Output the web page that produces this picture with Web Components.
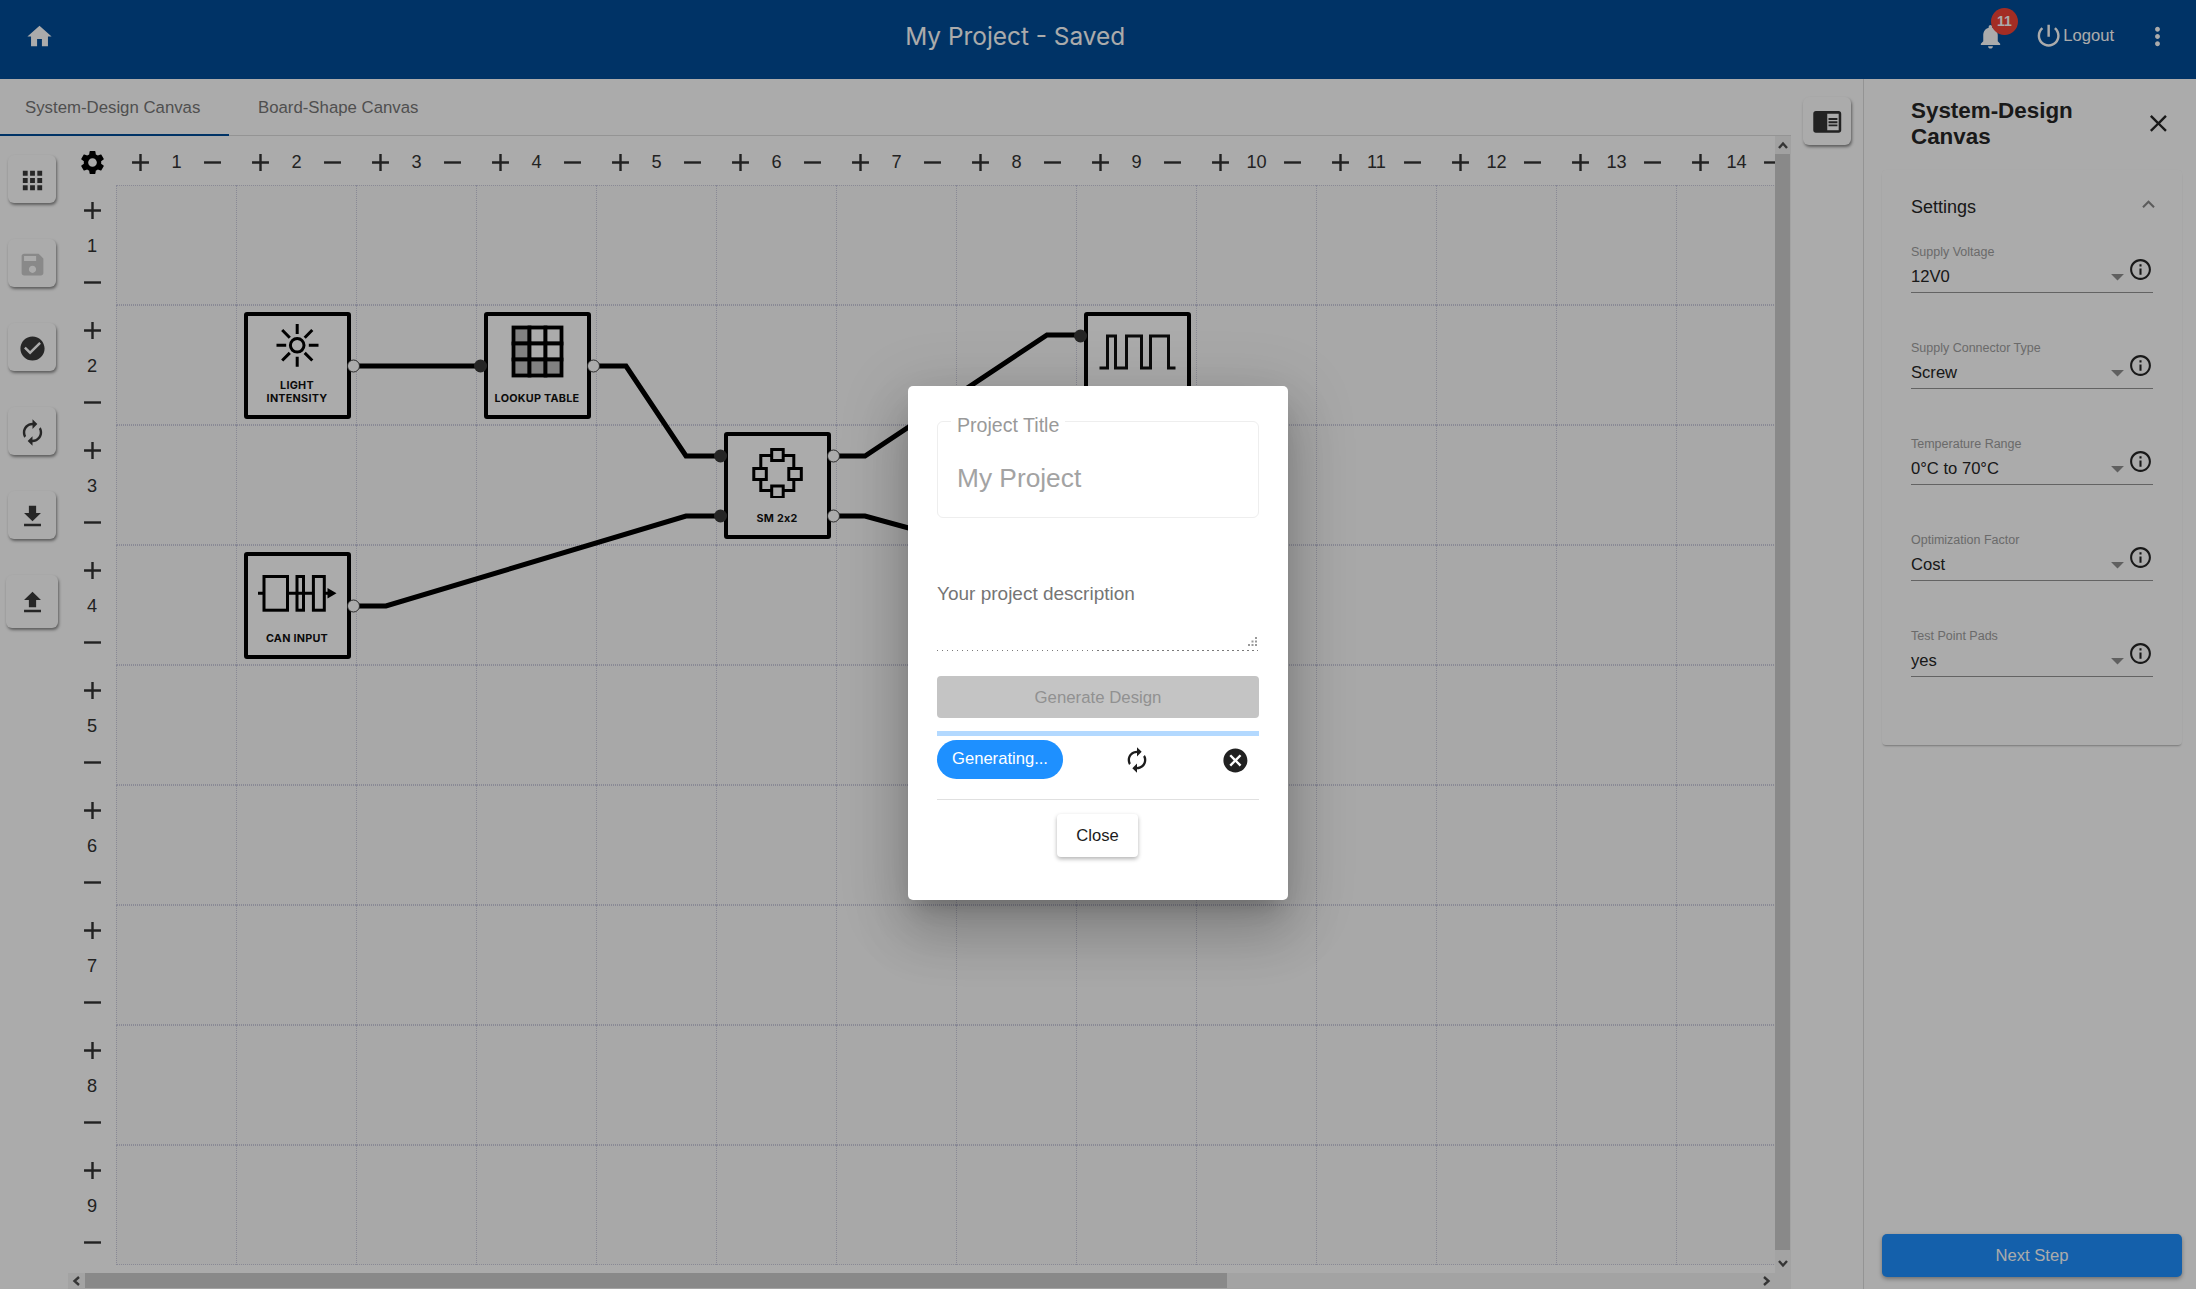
<!DOCTYPE html>
<html lang="en">
<head>
<meta charset="utf-8">
<title>My Project - Saved</title>
<style>
html,body{margin:0;padding:0;height:100%;overflow:hidden;background:#fff;font-family:"Liberation Sans",Arial,sans-serif}
sys-app{display:flex}
</style>
</head>
<body>
<sys-app></sys-app>
<script>
const PATHS={
home:'M10 20v-6h4v6h5v-8h3L12 3 2 12h3v8z',
bell:'M12 22c1.1 0 2-.9 2-2h-4c0 1.1.89 2 2 2zm6-6v-5c0-3.07-1.64-5.64-4.5-6.32V4c0-.83-.67-1.5-1.5-1.5s-1.5.67-1.5 1.5v.68C7.63 5.36 6 7.92 6 11v5l-2 2v1h16v-1l-2-2z',
power:'M13 3h-2v10h2V3zm4.83 2.17l-1.42 1.42C17.99 7.86 19 9.81 19 12c0 3.87-3.13 7-7 7s-7-3.13-7-7c0-2.19 1.01-4.14 2.58-5.42L6.17 5.17C4.23 6.82 3 9.26 3 12c0 4.97 4.03 9 9 9s9-4.03 9-9c0-2.74-1.23-5.18-3.17-6.83z',
more:'M12 8c1.1 0 2-.9 2-2s-.9-2-2-2-2 .9-2 2 .9 2 2 2zm0 2c-1.1 0-2 .9-2 2s.9 2 2 2 2-.9 2-2-.9-2-2-2zm0 6c-1.1 0-2 .9-2 2s.9 2 2 2 2-.9 2-2-.9-2-2-2z',
apps:'M4 8h4V4H4v4zm6 12h4v-4h-4v4zm-6 0h4v-4H4v4zm0-6h4v-4H4v4zm6 0h4v-4h-4v4zm6-10v4h4V4h-4zm-6 4h4V4h-4v4zm6 6h4v-4h-4v4zm0 6h4v-4h-4v4z',
save:'M17 3H5c-1.11 0-2 .9-2 2v14c0 1.1.89 2 2 2h14c1.1 0 2-.9 2-2V7l-4-4zm-5 16c-1.66 0-3-1.34-3-3s1.34-3 3-3 3 1.34 3 3-1.34 3-3 3zm3-10H5V5h10v4z',
check:'M12 2C6.48 2 2 6.48 2 12s4.48 10 10 10 10-4.48 10-10S17.52 2 12 2zm-2 15l-5-5 1.41-1.41L10 14.17l7.59-7.59L19 8l-9 9z',
sync:'M12 6v3l4-4-4-4v3c-4.42 0-8 3.58-8 8 0 1.57.46 3.03 1.24 4.26L6.7 14.8c-.45-.83-.7-1.79-.7-2.8 0-3.31 2.69-6 6-6zm6.76 1.74L17.3 9.2c.44.84.7 1.79.7 2.8 0 3.31-2.69 6-6 6v-3l-4 4 4 4v-3c4.42 0 8-3.58 8-8 0-1.57-.46-3.03-1.24-4.26z',
download:'M19 9h-4V3H9v6H5l7 7 7-7zM5 18v2h14v-2H5z',
upload:'M9 16h6v-6h4l-7-7-7 7h4v6zm-4 2h14v2H5v-2z',
gear:'M19.14 12.94c.04-.3.06-.61.06-.94 0-.32-.02-.64-.07-.94l2.03-1.58c.18-.14.23-.41.12-.61l-1.92-3.32c-.12-.22-.37-.29-.59-.22l-2.39.96c-.5-.38-1.03-.7-1.62-.94l-.36-2.54c-.04-.24-.24-.41-.48-.41h-3.84c-.24 0-.43.17-.47.41l-.36 2.54c-.59.24-1.13.57-1.62.94l-2.39-.96c-.22-.08-.47 0-.59.22L2.74 8.87c-.12.21-.08.47.12.61l2.03 1.58c-.05.3-.09.63-.09.94s.02.64.07.94l-2.03 1.58c-.18.14-.23.41-.12.61l1.92 3.32c.12.22.37.29.59.22l2.39-.96c.5.38 1.03.7 1.62.94l.36 2.54c.05.24.24.41.48.41h3.84c.24 0 .44-.17.47-.41l.36-2.54c.59-.24 1.13-.56 1.62-.94l2.39.96c.22.08.47 0 .59-.22l1.92-3.32c.12-.22.07-.47-.12-.61l-2.01-1.58zM12 15.6c-1.98 0-3.6-1.62-3.6-3.6s1.62-3.6 3.6-3.6 3.6 1.62 3.6 3.6-1.62 3.6-3.6 3.6z',
add:'M19 13h-6v6h-2v-6H5v-2h6V5h2v6h6v2z',
remove:'M19 13H5v-2h14v2z',
close:'M19 6.41L17.59 5 12 10.59 6.41 5 5 6.41 10.59 12 5 17.59 6.41 19 12 13.41 17.59 19 19 17.59 13.41 12z',
less:'M12 8l-6 6 1.41 1.41L12 10.83l4.59 4.58L18 14z',
drop:'M7 10l5 5 5-5z',
info:'M11 7h2v2h-2zm0 4h2v6h-2zm1-9C6.48 2 2 6.48 2 12s4.48 10 10 10 10-4.48 10-10S17.52 2 12 2zm0 18c-4.41 0-8-3.59-8-8s3.59-8 8-8 8 3.59 8 8-3.59 8-8 8z',
reader:'M13 12h7v1.5h-7zm0-2.5h7V11h-7zm0 5h7V16h-7zM21 4H3c-1.1 0-2 .9-2 2v13c0 1.1.9 2 2 2h18c1.1 0 2-.9 2-2V6c0-1.1-.9-2-2-2zm0 15h-9V6h9v13z',
cancel:'M12 2C6.47 2 2 6.47 2 12s4.47 10 10 10 10-4.47 10-10S17.53 2 12 2zm5 13.59L15.59 17 12 13.41 8.41 17 7 15.59 10.59 12 7 8.41 8.41 7 12 10.59 15.59 7 17 8.41 13.41 12 17 15.59z'
};
const FONT='"Liberation Sans",Arial,sans-serif';
class Base extends HTMLElement{
  constructor(){super();this.attachShadow({mode:'open'});}
  connectedCallback(){ if(!this._done){this._done=true;this.shadowRoot.innerHTML=this.render();} }
}
customElements.define('sys-icon',class extends Base{
  render(){
    const s=this.getAttribute('size')||24,c=this.getAttribute('color')||'currentColor',n=this.getAttribute('name');
    return `<style>:host{display:block;flex:none;width:${s}px;height:${s}px;line-height:0}svg{display:block;width:100%;height:100%}</style>
    <svg viewBox="0 0 24 24" fill="${c}"><path d="${PATHS[n]}"/></svg>`;
  }
});
customElements.define('sys-header',class extends Base{
  render(){return `<style>
  :host{display:flex;flex:none;height:79px;box-sizing:border-box;background:#004c98;color:#fff;align-items:center;padding:0 24.5px 6px 24.5px;font-family:${FONT}}
  .title{flex:1;text-align:center;font:400 24.4px Inter,"Open Sans",sans-serif;margin-left:4.5px;margin-top:-1px}
  .right{display:flex;align-items:center;padding-left:3.5px}
  .bell{position:relative;display:block}
  .badge{position:absolute;left:15px;top:-14px;width:27px;height:27px;border-radius:50%;background:#f44336;color:#fff;font:700 14px/27px ${FONT};text-align:center}
  .power{margin-left:29px;margin-top:-2px}
  .logout{font-size:16.6px;margin-top:-1px}
  .more{margin-left:28.5px}
  </style>
  <sys-icon name="home" size="29" color="#fff"></sys-icon>
  <div class="title">My Project - Saved</div>
  <div class="right">
    <div class="bell"><sys-icon name="bell" size="29" color="#fff"></sys-icon><span class="badge">11</span></div>
    <sys-icon class="power" name="power" size="29.3" color="#fff"></sys-icon>
    <span class="logout">Logout</span>
    <sys-icon class="more" name="more" size="29" color="#fff"></sys-icon>
  </div>`;}
});
customElements.define('sys-tabs',class extends Base{
  render(){return `<style>
  :host{display:flex;flex:none;height:57px;box-sizing:border-box;border-bottom:1px solid #ddd;font:16.8px ${FONT};color:#777}
  .t{display:flex;align-items:center;height:56px;box-sizing:border-box;padding-top:1px}
  .a{width:229px;padding-left:25px;border-bottom:2px solid #004c98;margin-bottom:-1px;padding-top:3px;height:57px}
  .b{padding-left:29px}
  </style><div class="t a">System-Design Canvas</div><div class="t b">Board-Shape Canvas</div>`;}
});
customElements.define('tool-btn',class extends Base{
  render(){const w=this.hasAttribute('wide');
    return `<style>
    :host{display:flex;flex:none;align-items:center;justify-content:center;box-sizing:border-box;width:${w?52:48}px;height:${w?53:48}px;${w?'margin-left:-2px;':''}background:#fff;border-radius:6px;box-shadow:1px 2px 3px rgba(0,0,0,.45)}
    </style><slot></slot>`;}
});
customElements.define('sys-toolbar',class extends Base{
  render(){return `<style>:host{display:flex;flex:none;flex-direction:column;width:68px;box-sizing:border-box;padding:19px 0 0 8px;gap:36px}::slotted(tool-btn){padding-top:2px}</style><slot></slot>`;}
});
customElements.define('axis-cell',class extends Base{
  render(){const v=this.hasAttribute('vertical');
    return `<style>
    :host{display:flex;flex:none;box-sizing:border-box;flex-direction:${v?'column':'row'};${v?'width:48px;height:120px;padding-top:7.5px':'width:120px;height:49px;padding:3px 0 0 6.5px'};color:#333;font:18.2px ${FONT}}
    .s{display:flex;align-items:center;justify-content:center;width:${v?'48px':'36px'};height:${v?'36px':'46px'};flex:none}
    </style>
    <div class="s"><sys-icon name="add" size="29" color="#333"></sys-icon></div>
    <div class="s">${this.getAttribute('n')}</div>
    <div class="s"><sys-icon name="remove" size="29" color="#333"></sys-icon></div>`;}
});
customElements.define('sys-node',class extends Base{
  render(){
    const x=+this.getAttribute('x'),y=+this.getAttribute('y');
    const pin=(a,cls)=>(this.getAttribute(a)||'').split(',').filter(Boolean).map(t=>`<i class="p ${cls}" style="top:${+t}px"></i>`).join('');
    return `<style>
    :host{position:absolute;left:${x}px;top:${y}px;width:107px;height:107px;box-sizing:border-box;border:4px solid #000;border-radius:3px;background:#fff;display:flex;flex-direction:column;align-items:center;padding-bottom:10px;z-index:2}
    ::slotted(svg){display:block;flex:none}
    .l{margin-top:auto;font:700 10.8px/13px Inter,"Open Sans",sans-serif;letter-spacing:.25px;font-feature-settings:"calt" 0;color:#111;text-align:center;white-space:nowrap}
    .p{position:absolute;box-sizing:border-box;border-radius:50%;transform:translate(0,-50%)}
    .i{left:-14px;width:13px;height:13px;background:#3a3a3a;margin-top:-4px}
    .o{right:-13.5px;width:13px;height:13px;background:#fff;border:1.3px solid #444;margin-top:-4px}
    </style>
    <slot name="icon"></slot><div class="l"><slot></slot></div>${pin('in','i')}${pin('out','o')}`;}
});
customElements.define('sys-canvas',class extends Base{
  render(){
    let cols='',rows='',cells='';
    for(let i=1;i<=14;i++)cols+=`<axis-cell n="${i}"></axis-cell>`;
    for(let i=1;i<=9;i++)rows+=`<axis-cell vertical n="${i}"></axis-cell>`;
    for(let i=0;i<126;i++)cells+='<b></b>';
    const vp=(x,y)=>`viewBox="${x+4} ${y+4} 99 62" width="99" height="62" slot="icon"`;
    return `<style>
    :host{display:flex;flex:1;min-width:0;min-height:0}
    .main{flex:1;min-width:0;display:flex;flex-direction:column}
    .view{flex:1;min-height:0;overflow:hidden;display:grid;grid-template-columns:48px max-content;grid-template-rows:49px max-content}
    .corner{display:flex;align-items:center;justify-content:center;padding-top:3px;box-sizing:border-box}
    .cols{display:flex}.rows{display:flex;flex-direction:column}
    .stage{position:relative;width:1680px;height:1080px;background:#fbfbfb;display:grid;grid-template-columns:repeat(14,120px);grid-template-rows:repeat(9,120px);}
    .stage b{display:block;box-sizing:border-box;border-left:1px dotted #cdcdde;border-top:1px dotted #cdcdde;border-bottom:1px dotted #cdcdde}
    .wires{position:absolute;left:0;top:0;z-index:1;overflow:visible}
    .hs{flex:none;height:16px;display:flex;align-items:stretch;background:#f4f4f4;padding-bottom:1px;box-sizing:border-box}
    .hs .thumb{width:1142px;background:#cdcdcd}
    .hs .sp{flex:1}
    .btn{display:flex;align-items:center;justify-content:center;flex:none}
    .hs .btn{width:17px}
    .vs{flex:none;width:16px;display:flex;flex-direction:column;background:#f4f4f4}
    .vs .btn{height:17px}
    .vs .up{height:18px;background:#f0f0f0}
    .vs .thumb{height:1096px;width:15px;background:#cdcdcd}
    svg.ch{display:block}
    </style>
    <div class="main">
      <div class="view">
        <div class="corner"><sys-icon name="gear" size="29" color="#000"></sys-icon></div>
        <div class="cols">${cols}</div>
        <div class="rows">${rows}</div>
        <div class="stage">${cells}
          <svg class="wires" width="1680" height="1080" viewBox="116 185 1680 1080" fill="none" stroke="#000" stroke-width="5" stroke-linejoin="miter">
            <path d="M354 366H480"/>
            <path d="M594 366H626L686 456H720"/>
            <path d="M354 606H386L686 516H720"/>
            <path d="M834 456H865L1047 335H1080"/>
            <path d="M834 516H865L1000 553"/>
          </svg>
          <sys-node x="127.5" y="127" out="53.7">
            <svg ${vp(243.5,312)} fill="none" stroke="#000" stroke-width="3">
              <circle cx="296.7" cy="345.3" r="6.8"/>
              <path d="M296.7 324V334M296.7 356.7V366.7M276 345.3H285.7M308.3 345.3H318M281.7 330L289.3 337.7M304.2 352.9L311.8 360.5M311.8 330L304.2 337.7M289.3 352.9L281.7 360.5"/>
            </svg>LIGHT<br>INTENSITY</sys-node>
          <sys-node x="367.5" y="127" in="53.7" out="53.7">
            <svg ${vp(483.5,312)} stroke="#000" stroke-width="3.8" fill="#fff">
              <rect x="513" y="327.5" width="16" height="16" fill="#c0c0c0"/><rect x="529" y="327.5" width="16" height="16"/><rect x="545" y="327.5" width="16" height="16"/>
              <rect x="513" y="343.5" width="16" height="16" fill="#c0c0c0"/><rect x="529" y="343.5" width="16" height="16"/><rect x="545" y="343.5" width="16" height="16"/>
              <rect x="513" y="359.5" width="16" height="16" fill="#c0c0c0"/><rect x="529" y="359.5" width="16" height="16" fill="#c0c0c0"/><rect x="545" y="359.5" width="16" height="16" fill="#c0c0c0"/>
            </svg>LOOKUP TABLE</sys-node>
          <sys-node x="607.5" y="247" in="23.7,83.7" out="23.7,83.7">
            <svg ${vp(723.5,432)} stroke="#000" stroke-width="3" fill="#fff">
              <rect x="760.3" y="455.5" width="33" height="35" fill="none"/>
              <rect x="771.2" y="449.5" width="11.5" height="11"/>
              <rect x="771.2" y="486" width="11.5" height="11.5"/>
              <rect x="753.3" y="468.5" width="12.5" height="11"/>
              <rect x="788.3" y="468.5" width="12.5" height="11"/>
            </svg>SM 2x2</sys-node>
          <sys-node x="127.5" y="367" out="53.7">
            <svg ${vp(243.5,552)} stroke="#000" stroke-width="3" fill="none">
              <rect x="263.5" y="576.5" width="23.5" height="33.7"/>
              <rect x="296.5" y="576.5" width="6.5" height="33.7"/>
              <rect x="312.9" y="576.5" width="10.9" height="33.7"/>
              <path d="M257.5 593.3H263M287 593.3H312.9M323.8 593.3H329"/>
              <path d="M327 588L336 593.3L327 598.6Z" fill="#000" stroke="none"/>
            </svg>CAN INPUT</sys-node>
          <sys-node x="967.5" y="127" in="23.7">
            <svg ${vp(1083.5,312)} stroke="#111" stroke-width="3" fill="none">
              <path d="M1099 368H1107V336H1115V368H1126V336H1141V368H1150V336H1168V368H1175"/>
            </svg></sys-node>
        </div>
      </div>
      <div class="hs">
        <div class="btn"><svg class="ch" width="9" height="10" viewBox="0 0 9 10" fill="none" stroke="#505050" stroke-width="2.4"><path d="M7 1L2.5 5L7 9"/></svg></div>
        <div class="thumb"></div><div class="sp"></div>
        <div class="btn"><svg class="ch" width="9" height="10" viewBox="0 0 9 10" fill="none" stroke="#505050" stroke-width="2.4"><path d="M2 1L6.5 5L2 9"/></svg></div>
      </div>
    </div>
    <div class="vs">
      <div class="btn up"><svg class="ch" width="10" height="9" viewBox="0 0 10 9" fill="none" stroke="#505050" stroke-width="2.4"><path d="M1 7L5 2.5L9 7"/></svg></div>
      <div class="thumb"></div>
      <div style="height:5px;flex:none"></div>
      <div class="btn"><svg class="ch" width="10" height="9" viewBox="0 0 10 9" fill="none" stroke="#505050" stroke-width="2.4"><path d="M1 2L5 6.5L9 2"/></svg></div>
    </div>`;}
});
customElements.define('sys-select',class extends Base{
  render(){return `<style>
  :host{display:block;height:96px;font-family:${FONT}}
  .l{font-size:12.5px;line-height:16px;color:#9e9e9e;white-space:nowrap}
  .r{display:flex;align-items:center;height:33px;box-sizing:border-box;border-bottom:1px solid #949494}
  .v{flex:1;font-size:16.6px;color:#262626;padding-top:2px}
  .dr{margin:0 -2.5px 0 -2.5px}
  .info{align-self:flex-start;margin:-3px 0 0 -2px}
  </style><div class="l">${this.getAttribute('label')}</div>
  <div class="r"><span class="v">${this.getAttribute('value')}</span>
  <sys-icon class="dr" name="drop" size="31" color="#8f8f8f"></sys-icon>
  <sys-icon class="info" name="info" size="25" color="#262626"></sys-icon></div>`;}
});
customElements.define('sys-panel',class extends Base{
  render(){return `<style>
  :host{display:flex;flex:none;flex-direction:column;width:333px;box-sizing:border-box;border-left:1px solid #ddd;padding:18px 14px 12px 18px;font-family:${FONT};color:#262626}
  .h{display:flex;align-items:center;padding:0 9.6px 0 29px;height:53px;flex:none}
  .t{flex:1;font:700 22.4px/26.4px ${FONT};max-width:190px;margin-right:auto;padding-top:1px}
  .card{flex:none;margin-top:20px;height:575px;box-sizing:border-box;border-radius:4px;box-shadow:0 2px 2px -1px rgba(0,0,0,.3),0 0 1px rgba(0,0,0,.04);padding:0 29px}
  .sh{display:flex;height:74px;box-sizing:border-box;padding-top:27px;font-size:18px;line-height:21px;margin-right:-7.5px;justify-content:space-between}
  .sh sys-icon{margin-top:-5.5px}
  .next{margin-top:auto;height:43px;flex:none;background:#1e90ff;color:#fff;border-radius:5px;display:flex;align-items:center;justify-content:center;font-size:16.6px;box-shadow:0 2px 4px rgba(0,0,0,.35)}
  </style>
  <div class="h"><div class="t">System-Design Canvas</div><sys-icon name="close" size="28.8" color="#262626"></sys-icon></div>
  <div class="card">
    <div class="sh"><span>Settings</span><sys-icon name="less" size="25" color="#8a8a8a"></sys-icon></div>
    <slot></slot>
  </div>
  <div class="next">Next Step</div>`;}
});
customElements.define('sys-dialog',class extends Base{
  render(){return `<style>
  :host{position:absolute;inset:0;z-index:10;background:rgba(0,0,0,.33);display:flex;align-items:center;justify-content:center;padding-bottom:3.4px;box-sizing:border-box;font-family:${FONT}}
  .m{width:380px;box-sizing:border-box;background:#fff;border-radius:5px;padding:21.8px 29px 43px;box-shadow:0 15px 21px -10px rgba(0,0,0,.2),0 34px 53px 4px rgba(0,0,0,.14),0 13px 64px 11px rgba(0,0,0,.12)}
  fieldset{margin:0;padding:0;border:1px solid #eee;border-radius:6px;display:block;height:111px;box-sizing:border-box;min-width:0}
  legend{margin-left:13px;padding:7px 6px 0;font-size:19.6px;line-height:22px;color:#999}
  .in{font-size:26.3px;line-height:30px;color:#a3a3a3;padding:27px 0 0 19px}
  .d{margin-top:64px;height:68.4px;box-sizing:border-box;padding-top:1px;font-size:19px;line-height:22px;color:#757575;position:relative;background:repeating-linear-gradient(90deg,#7a7a7a 0 1.5px,transparent 1.5px 5px) left bottom/100% 1px no-repeat}
  .grip{position:absolute;right:2px;bottom:5px;display:block}
  .g{margin-top:25px;height:42.5px;background:#c4c4c4;color:#919191;border-radius:4px;display:flex;align-items:center;justify-content:center;font-size:16.8px;padding-top:1px;box-sizing:border-box}
  .pr{margin-top:12.5px;height:5px;background:#b3d9ff}
  .st{display:flex;align-items:center;margin-top:4px;height:39px}
  .pill{width:126px;height:39px;border-radius:20px;background:#1e90ff;color:#fff;display:flex;align-items:center;justify-content:center;font-size:16.6px;margin-right:59.7px;box-sizing:border-box}
  .st sys-icon{margin-top:2px}
  .x{margin-left:70px}
  .hr{height:1px;background:#e0e0e0;margin-top:20.4px}
  .c{display:block;width:81px;height:42.6px;margin:14.2px 0 0 120px;border-radius:4px;background:#fff;color:#1c1c1c;font-size:16.6px;line-height:44px;text-align:center;box-shadow:0 2px 4px rgba(0,0,0,.3)}
  </style>
  <div class="m">
    <fieldset><legend>Project Title</legend><div class="in">My Project</div></fieldset>
    <div class="d">Your project description
      <svg class="grip" width="9" height="9" viewBox="0 0 9 9" fill="#999"><rect x="7" y="0" width="2" height="2"/><rect x="3.5" y="3.5" width="2" height="2"/><rect x="7" y="3.5" width="2" height="2"/><rect x="0" y="7" width="2" height="2"/><rect x="3.5" y="7" width="2" height="2"/><rect x="7" y="7" width="2" height="2"/></svg>
    </div>
    <div class="g">Generate Design</div>
    <div class="pr"></div>
    <div class="st"><div class="pill">Generating...</div>
      <sys-icon name="sync" size="28" color="#1c1c1c"></sys-icon>
      <sys-icon class="x" name="cancel" size="28.8" color="#212121"></sys-icon></div>
    <div class="hr"></div>
    <div class="c">Close</div>
  </div>`;}
});
customElements.define('sys-app',class extends Base{
  render(){
    const fields=[['Supply Voltage','12V0'],['Supply Connector Type','Screw'],['Temperature Range','0°C to 70°C'],['Optimization Factor','Cost'],['Test Point Pads','yes']]
      .map(([l,v])=>`<sys-select label="${l}" value="${v}"></sys-select>`).join('');
    const tool=(n,c='#3a3a3a',w='')=>`<tool-btn ${w}><sys-icon name="${n}" size="29" color="${c}"></sys-icon></tool-btn>`;
    return `<style>
    :host{display:flex;flex-direction:column;position:relative;width:100vw;height:100vh;overflow:hidden;background:#fff;font-family:${FONT}}
    .body{flex:1;display:flex;min-height:0}
    .left{flex:1;min-width:0;display:flex}
    .col{flex:none;width:1791px;display:flex;flex-direction:column}
    .work{flex:1;display:flex;min-height:0}
    .side{flex:1;padding:18px 0 0 12px;box-sizing:border-box}
    </style>
    <sys-header></sys-header>
    <div class="body">
      <div class="left">
        <div class="col">
          <sys-tabs></sys-tabs>
          <div class="work">
            <sys-toolbar>${tool('apps')}${tool('save','#cccccc')}${tool('check')}${tool('sync')}${tool('download')}${tool('upload','#3a3a3a','wide')}</sys-toolbar>
            <sys-canvas></sys-canvas>
          </div>
        </div>
        <div class="side"><tool-btn><sys-icon name="reader" size="30.5" color="#333"></sys-icon></tool-btn></div>
      </div>
      <sys-panel>${fields}</sys-panel>
    </div>
    <sys-dialog></sys-dialog>`;}
});
</script>
</body>
</html>
